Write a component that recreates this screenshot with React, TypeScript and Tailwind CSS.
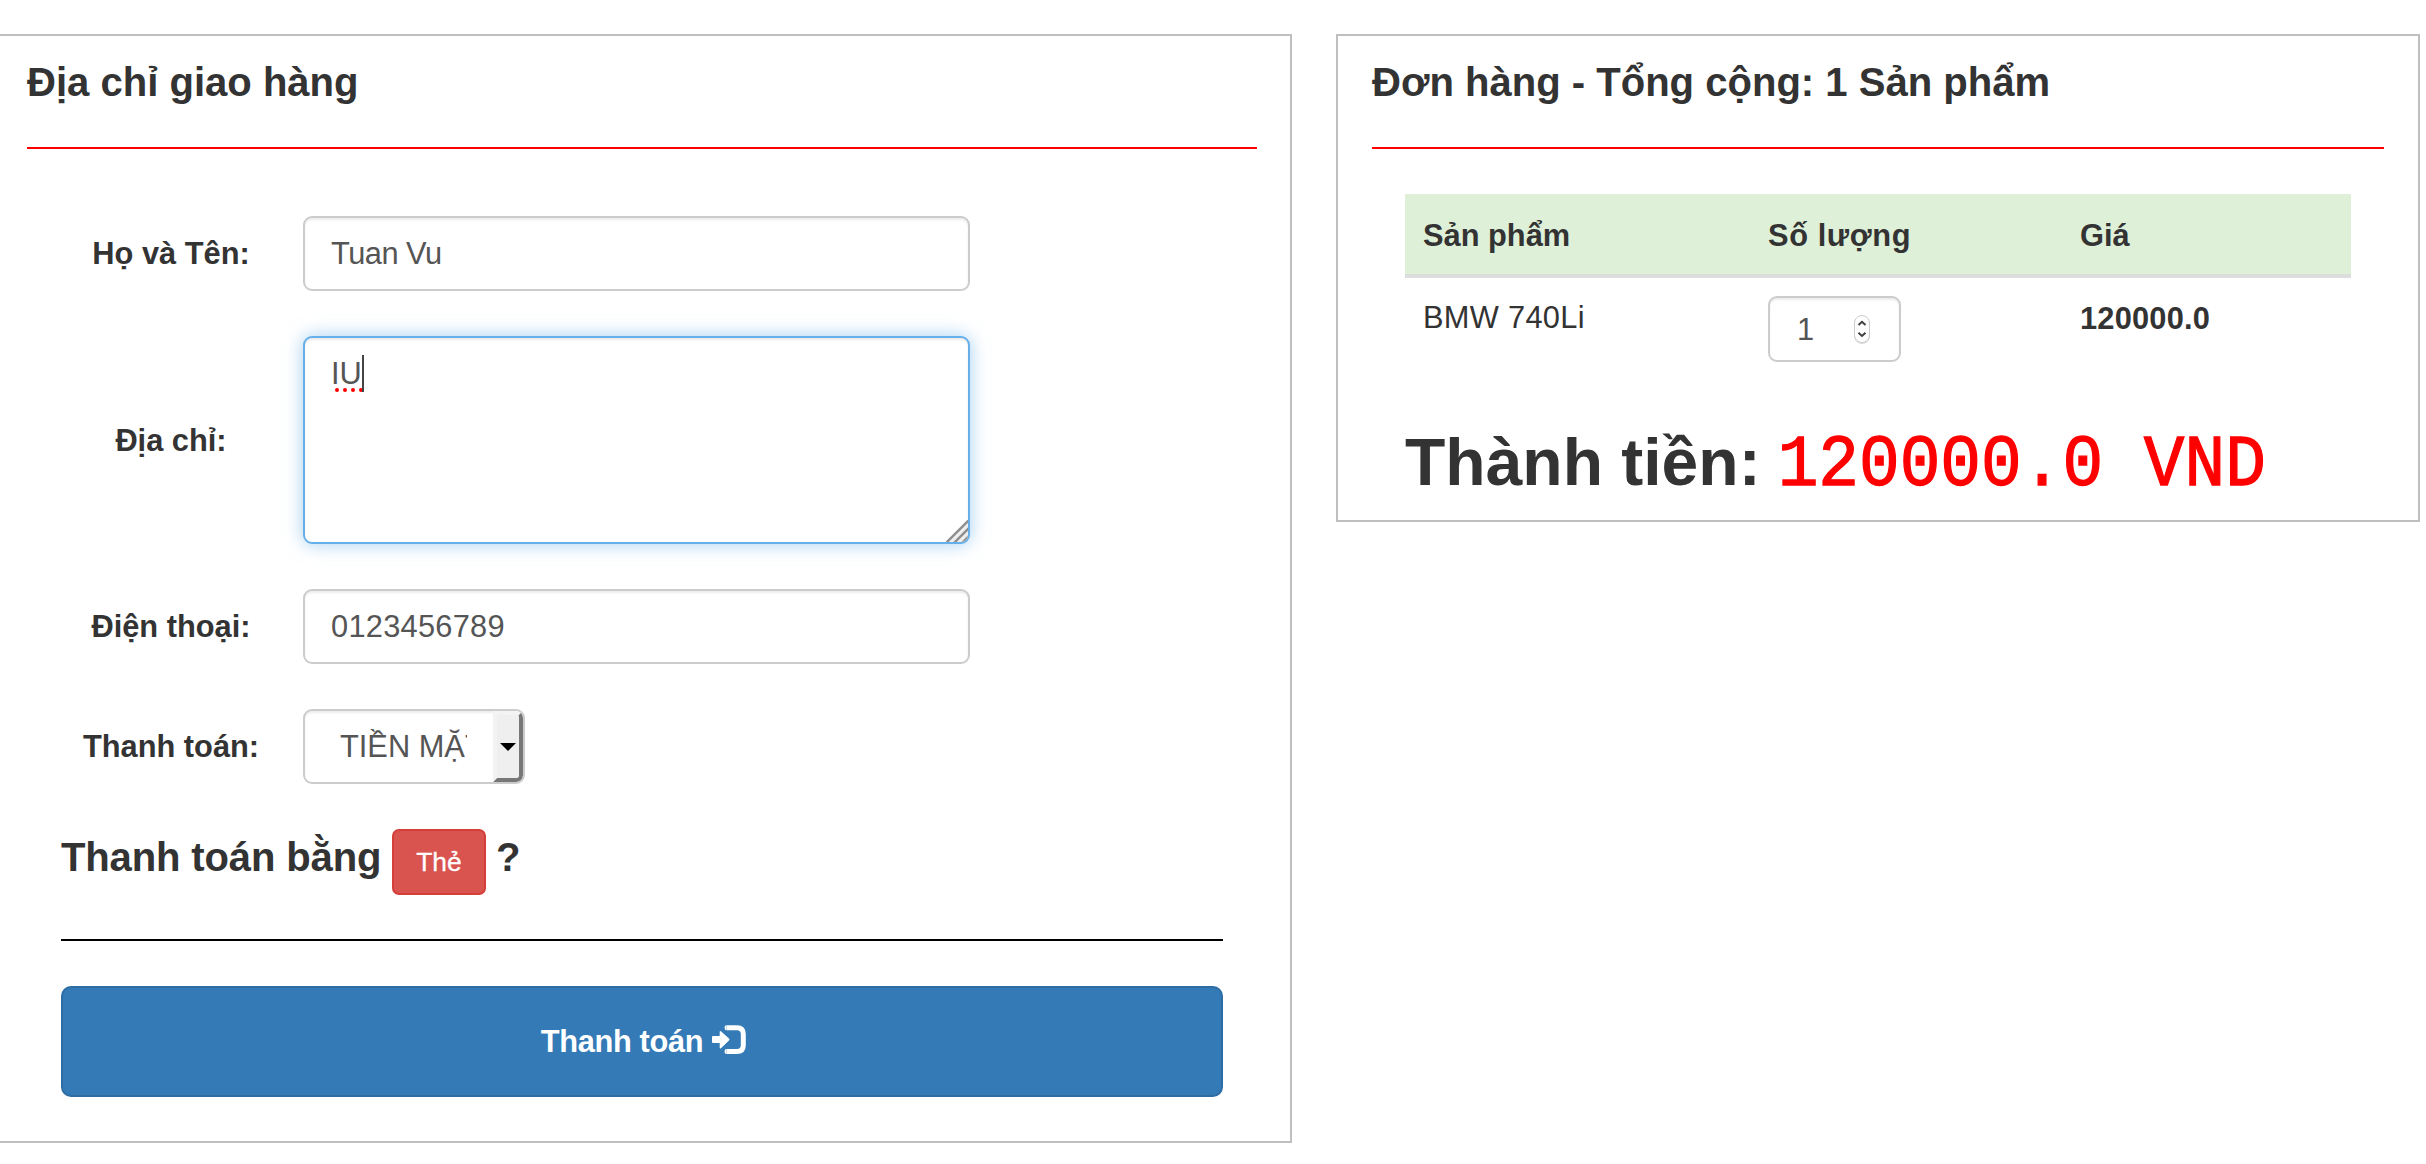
import React from "react";

const inputClass =
  "h-[75px] w-[667px] rounded-[9px] border-2 border-[#ccc] bg-white px-[26px] text-[30.8px] leading-[44px] text-[#555] shadow-[inset_0_2px_2px_rgba(0,0,0,0.075)] outline-none";

function FieldRow({ label, className, children }: { label: string; className: string; children: React.ReactNode }) {
  return (
    <div className={`flex items-center gap-[22px] ${className}`}>
      <label className="w-[220px] pt-px text-center font-bold">{label}</label>
      {children}
    </div>
  );
}

function LogInIcon() {
  return (
    <svg className="mb-[3px] ml-[9px] h-[30px] w-[34px] shrink-0" viewBox="0 0 34 30" fill="none">
      <path d="M0 12 Q0 11 1 11 H7.7 V6.8 Q7.9 5.2 9.2 6.4 L17 13.6 Q18 14.6 17 15.6 L9.2 23 Q7.9 24.2 7.7 22.6 V18 H1 Q0 18 0 17 Z" fill="white" />
      <path d="M14.5 2.7 H25 Q31.3 2.7 31.3 9 V20.3 Q31.3 26.5 25 26.5 H14.5" stroke="white" strokeWidth="5" />
      <path d="M14.5 0.2 Q12.6 0.2 12.6 2.2 V3.2 Q12.6 5.2 14.5 5.2 Z M14.5 24 Q12.6 24 12.6 26 V27 Q12.6 29 14.5 29 Z" fill="white" />
    </svg>
  );
}

function Spinner() {
  return (
    <svg className="h-[32px] w-[20px]" viewBox="0 0 20 32" fill="none">
      <rect x="2.5" y="3.5" width="15" height="27" rx="7.5" stroke="#bbb" strokeOpacity="0.6" />
      <rect x="2.5" y="2.5" width="15" height="27" rx="7.5" fill="white" stroke="#ccc" />
      <path d="M6.5 12 L10 8.8 L13.5 12 M6.5 19.8 L10 23 L13.5 19.8" stroke="#404040" strokeWidth="2" />
    </svg>
  );
}

export default function App() {
  return (
    <div className="flex h-[1164px] w-[2426px] items-start overflow-hidden bg-white pt-[34px] font-['Liberation_Sans',Arial,sans-serif] text-[30.8px] leading-[44px] text-[#333]">
      <section className="h-[1109px] w-[1292px] border-y-2 border-r-2 border-[#bfbfbf] pl-[27px] pr-[33px]">
        <h2 className="flex h-[111px] items-start pt-[24px] text-[40.05px] font-bold">Địa chỉ giao hàng</h2>
        <hr className="border-t-2 border-[red]" />
        <div className="flex flex-col px-[34px] pt-[67px]">
          <FieldRow label="Họ và Tên:" className="h-[75px]">
            <input className={`${inputClass} tracking-[-0.5px]`} defaultValue="Tuan Vu" />
          </FieldRow>
          <FieldRow label="Địa chỉ:" className="mt-[45px] h-[208px]">
            <div className="relative h-[208px] w-[667px] overflow-hidden rounded-[9px] border-2 border-[#66afe9] bg-white px-[26px] pt-[14px] text-[#555] shadow-[inset_0_2px_2px_rgba(0,0,0,0.075),0_0_18px_rgba(102,175,233,0.6)]">
              IU
              <svg className="absolute left-[26px] top-[16px] h-[40px] w-[36px]" viewBox="0 0 36 40">
                <g fill="red">
                  <circle cx="6" cy="36" r="2" />
                  <circle cx="14" cy="36" r="2" />
                  <circle cx="22" cy="36" r="2" />
                  <circle cx="30" cy="36" r="2" />
                </g>
                <rect x="31" y="1" width="2" height="37" fill="#444" />
              </svg>
              <svg className="absolute bottom-0 right-0 h-[22px] w-[22px]" viewBox="0 0 22 22">
                <path d="M0 22 L22 0 V22 Z" fill="#efefef" />
                <path d="M0 23 L23 0 M8 23 L23 8 M16 23 L23 16" stroke="#8f8f8f" strokeWidth="2.4" />
              </svg>
            </div>
          </FieldRow>
          <FieldRow label="Điện thoại:" className="mt-[45px] h-[75px]">
            <input className={`${inputClass} tracking-[0.25px]`} defaultValue="0123456789" />
          </FieldRow>
          <FieldRow label="Thanh toán:" className="mt-[45px] h-[75px]">
            <div className="flex h-[75px] w-[222px] items-center justify-between overflow-hidden rounded-[9px] border-2 border-[#ccc] text-[#555] shadow-[inset_0_2px_2px_rgba(0,0,0,0.075)]">
              <span className="ml-[35px] w-[127px] overflow-hidden whitespace-nowrap">TIỀN MẶT</span>
              <span className="flex h-full w-[30px] items-center justify-center rounded-r-[6px] border-4 border-b-[#777] border-l-[#f3f3f3] border-r-[#777] border-t-[#f3f3f3] bg-[#efefef]">
                <svg className="h-[8px] w-[16px] shrink-0" viewBox="0 0 16 8">
                  <path d="M0 0 H16 L8 8 Z" fill="black" />
                </svg>
              </span>
            </div>
          </FieldRow>
          <div className="mt-[45px] flex h-[66px] text-[40.05px] font-bold">
            <span className="mt-[6px] w-[331px] whitespace-nowrap tracking-[-0.15px]">Thanh toán bằng</span>
            <button className="flex h-[66px] w-[94px] items-center justify-center rounded-[7px] border-2 border-[#d43f3a] bg-[#d9534f] text-[26.4px] font-normal text-white [-webkit-text-stroke:0.3px_white]">
              Thẻ
            </button>
            <span className="ml-[10px] mt-[6px]">?</span>
          </div>
          <hr className="mt-[44px] border-t-2 border-black" />
          <button className="mt-[45px] flex h-[111px] items-center justify-center rounded-[10px] border-2 border-[#2e6da4] bg-[#337ab7] pl-[3px] font-bold tracking-[-0.35px] text-white">
            Thanh toán
            <LogInIcon />
          </button>
        </div>
      </section>

      <section className="ml-[44px] h-[488px] w-[1084px] border-2 border-[#bfbfbf] px-[34px]">
        <h2 className="flex h-[111px] items-start pt-[24px] text-[40.05px] font-bold">Đơn hàng - Tổng cộng: 1 Sản phẩm</h2>
        <hr className="border-t-2 border-[red]" />
        <div className="px-[33px] pt-[45px]">
          <div className="grid h-[84px] grid-cols-[345px_312px_1fr] items-center border-b-4 border-[#ddd] bg-[#dff0d8] pl-[18px] pt-[3px] font-bold">
            <span>Sản phẩm</span>
            <span className="tracking-[0.6px]">Số lượng</span>
            <span>Giá</span>
          </div>
          <div className="grid grid-cols-[345px_312px_1fr] items-start pl-[18px] pt-[18px]">
            <span className="tracking-[0.3px]">BMW 740Li</span>
            <div className="flex h-[66px] w-[133px] items-center rounded-[9px] border-2 border-[#ccc] pl-[27px] text-[#555] shadow-[inset_0_2px_2px_rgba(0,0,0,0.075)]">
              <span className="w-[55px] pt-px">1</span>
              <Spinner />
            </div>
            <span className="pt-px font-bold tracking-[0.2px]">120000.0</span>
          </div>
          <div className="mt-[64px] flex h-[72px] items-baseline whitespace-nowrap text-[66px] font-bold leading-[72px]">
            Thành tiền:
            <span className="ml-[17px] origin-[0_75%] scale-y-[1.06] font-['Liberation_Mono',monospace] text-[67.8px] font-normal text-[red] [-webkit-text-stroke:1.2px_red]">
              120000.0 VND
            </span>
          </div>
        </div>
      </section>
    </div>
  );
}
